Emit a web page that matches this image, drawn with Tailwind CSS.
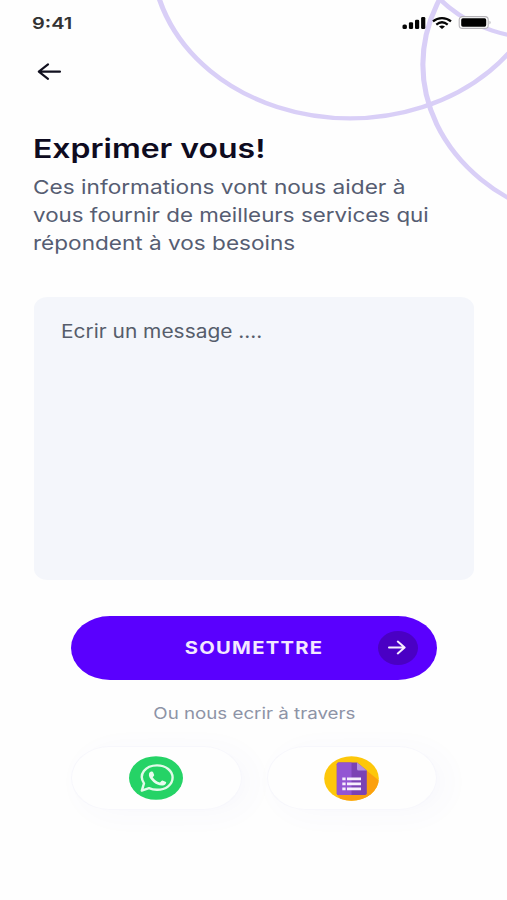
<!DOCTYPE html>
<html lang="fr">
  <head>
    <meta charset="UTF-8" />
    <meta name="viewport" content="width=device-width, initial-scale=1.0" />
    <title>Exprimer vous!</title>
    <script src="https://cdn.jsdelivr.net/npm/@tailwindcss/browser@4"></script>
  </head>
  <body class="bg-[#fefefe] font-['Inter',sans-serif]">
    <div class="relative w-[507px] h-[900px] overflow-hidden">
      <!-- Cercles décoratifs -->
      <svg class="absolute inset-0 w-[507px] h-[220px]" viewBox="0 0 507 220" fill="none" stroke="#d9cff7" stroke-width="4.2">
        <g transform="scale(1.22 1)">
          <circle cx="286.9" cy="-43.6" r="162" />
          <circle cx="508.6" cy="64.6" r="162" />
          <circle cx="442.2" cy="-67" r="105" />
        </g>
      </svg>

      <div class="relative">
        <!-- Barre d'état -->
        <div class="flex items-center justify-between h-[45px] pl-8 pr-[15px]">
          <span class="inline-block origin-left scale-x-[1.25] text-[16px] leading-5 font-semibold text-[#333]">9:41</span>
          <div class="flex items-center">
            <svg class="w-6 h-3" viewBox="0 0 24 12" fill="#050505">
              <rect x="0.5" y="7.5" width="4.4" height="4.5" rx="1.6" />
              <rect x="6.9" y="5.3" width="4.2" height="6.7" rx="1.3" />
              <rect x="13" y="2.8" width="4.2" height="9.2" rx="1.3" />
              <rect x="19.1" y="0" width="4.2" height="12" rx="1.3" />
            </svg>
            <svg class="ml-[6px] w-5 h-3" viewBox="0 0 20 12" fill="none" stroke="#050505" stroke-width="2.2">
              <path d="M1 4.4C6 0 14 0 19 4.4" />
              <path d="M4.3 7.6C7.8 4.7 12.2 4.7 15.7 7.6" />
              <path d="M7 9.6C9 8.2 11 8.2 13 9.6L10 12Z" fill="#050505" stroke="none" />
            </svg>
            <svg class="ml-[6px] w-[34px] h-[13px]" viewBox="0 0 34 13">
              <rect x="1.2" y="0.6" width="29" height="11.8" rx="3.2" fill="#fefefe" stroke="#b5b3b8" stroke-width="1.1" />
              <rect x="3.2" y="2.3" width="25" height="8.4" rx="1.6" fill="#000" />
              <path d="M31.5 4.8C33 5.3 33 7.7 31.5 8.2Z" fill="#b5b3b8" />
            </svg>
          </div>
        </div>

        <!-- Retour -->
        <div class="pl-[37px] pt-[17px] h-[87px]">
          <svg class="w-6 h-5" viewBox="0 0 24 20" fill="none" stroke="#11101f" stroke-width="2.1" stroke-linecap="round" stroke-linejoin="round">
            <path d="M23 9.6H1.8M11 2.4L1.8 9.6L11 16.8" />
          </svg>
        </div>

        <div class="pl-[33px]">
          <h1 class="w-fit origin-left scale-x-[1.23] whitespace-nowrap text-[26px] leading-[34px] font-semibold text-[#0e0b20]">Exprimer vous!</h1>
          <p class="mt-2 whitespace-nowrap text-[19px] leading-7 text-[#565d72]">
            <span class="block w-fit origin-left scale-x-[1.192]">Ces informations vont nous aider à</span>
            <span class="block w-fit origin-left scale-x-[1.177]">vous fournir de meilleurs services qui</span>
            <span class="block w-fit origin-left scale-x-[1.188]">répondent à vos besoins</span>
          </p>
        </div>

        <!-- Zone de message -->
        <div class="mt-[39px] ml-[34px] w-[440px] h-[283px] rounded-[14px/11px] bg-[#f4f6fb] pl-[27px] pt-5">
          <span class="inline-block origin-left scale-x-[1.13] whitespace-nowrap text-[18.5px] leading-7 text-[#565d6b]">Ecrir un message ....</span>
        </div>

        <div class="mt-[36px] ml-[71px] w-[366px]">
          <button class="relative flex items-center justify-center w-full h-16 rounded-[39px/32px] bg-[#5a00fe]">
            <span class="inline-block scale-x-[1.155] text-[17.5px] leading-6 font-bold tracking-[1.1px] text-[#f3e8ff]">SOUMETTRE</span>
            <span class="absolute right-[19px] top-[15px] flex items-center justify-center w-10 h-[34px] rounded-[50%] bg-[#4a00c4]">
              <svg class="mr-[2px] mb-[2px] w-[18px] h-[15px]" viewBox="0 0 18 15" fill="none" stroke="#f6edff" stroke-width="2" stroke-linecap="round" stroke-linejoin="round">
                <path d="M1 7.5H16.4M9.8 1.6L16.6 7.5L9.8 13.4" />
              </svg>
            </span>
          </button>

          <p class="mt-[21px] text-center leading-6">
            <span class="inline-block scale-x-[1.17] whitespace-nowrap text-[16px] text-[#8d93a6]">Ou nous ecrir à travers</span>
          </p>

          <!-- WhatsApp / Google Forms -->
          <div class="mt-[21px] flex justify-between">
            <a class="flex items-center justify-center w-[171px] h-16 pr-[2px] rounded-[39px/32px] bg-[#fefefe] border border-[#f7f7fc] shadow-[10px_4px_30px_rgba(90,80,200,0.035)]">
              <svg class="w-[54px] h-11" viewBox="0 0 54 44">
                <ellipse cx="27" cy="22" rx="27" ry="21.8" fill="#25d366" />
                <path d="M12.8 34.6L15 27.4C9 18.5 16.4 9.4 28 9.4C37 9.4 43.6 14.8 43.6 21.6C43.6 28.6 37 33.8 28 33.8C25 33.8 22.3 33.2 20 32.2Z" fill="none" stroke="#e2fbe9" stroke-width="2.4" stroke-linejoin="round" />
                <path d="M22.4 15.6C23.4 15.4 24 16 24.4 17L25.2 19C25.4 19.8 24 20.8 23.7 21.3C25.3 24 27.8 25.6 30.9 26.5C31.7 26 32.6 24.4 33.5 24.5L37 26C37.6 26.6 36.8 28.4 35 29.2C31.8 30.4 27.3 28.4 24.3 25.9C21.3 23.2 19.3 20.2 20 17.8C20.4 16.6 21.3 15.7 22.4 15.6Z" fill="#e8fcee" />
              </svg>
            </a>
            <a class="flex items-center justify-center w-[170px] h-16 pr-[2px] rounded-[39px/32px] bg-[#fefefe] border border-[#f7f7fc] shadow-[10px_4px_30px_rgba(90,80,200,0.035)]">
              <svg class="w-[55px] h-[45px]" viewBox="0 0 55 45">
                <defs>
                  <clipPath id="rond"><ellipse cx="27.5" cy="22.5" rx="27.3" ry="22.3" /></clipPath>
                </defs>
                <g clip-path="url(#rond)">
                  <rect width="55" height="45" fill="#fdc70a" />
                  <path d="M42.5 14.5L58 27V48H20L13 38.5Z" fill="#fba00f" />
                </g>
                <path d="M14.5 6.5H33L42.8 14.6V37.3Q42.8 39 41 39H14.5Q12.8 39 12.8 37.3V8.2Q12.8 6.5 14.5 6.5Z" fill="#7b42b4" />
                <path d="M14.5 6.5H27.5V39H14.5Q12.8 39 12.8 37.3V8.2Q12.8 6.5 14.5 6.5Z" fill="#9355d3" />
                <path d="M33 6.5L42.8 14.6H34.6Q33 14.6 33 13Z" fill="#b590dc" />
                <path d="M18.3 22.9H21.6M18.3 27.9H21.6M18.3 32.9H21.6M23 22.9H37M23 27.9H37M23 32.9H37" stroke="#f7effc" stroke-width="2.8" />
              </svg>
            </a>
          </div>
        </div>
      </div>
    </div>
  </body>
</html>
